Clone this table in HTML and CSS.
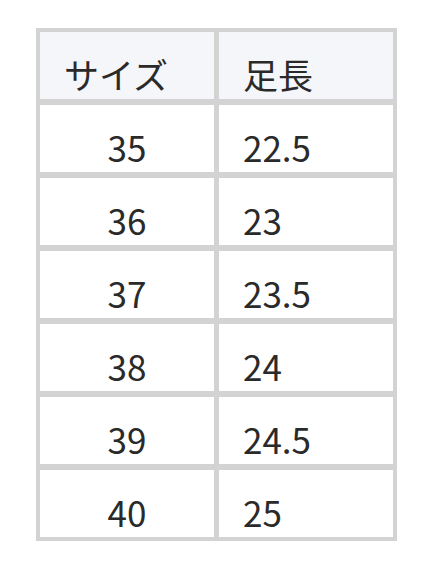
FILE: index.html
```html
<!DOCTYPE html>
<html lang="ja">
<head>
<meta charset="utf-8">
<link rel="stylesheet" href="styles.css">
</head>
<body>
<div class="size-table" role="table">
  <div class="cell head" role="columnheader">サイズ</div>
  <div class="cell head" role="columnheader">足長</div>
  <div class="cell num" role="cell">35</div>
  <div class="cell" role="cell">22.5</div>
  <div class="cell num" role="cell">36</div>
  <div class="cell" role="cell">23</div>
  <div class="cell num" role="cell">37</div>
  <div class="cell" role="cell">23.5</div>
  <div class="cell num" role="cell">38</div>
  <div class="cell" role="cell">24</div>
  <div class="cell num" role="cell">39</div>
  <div class="cell" role="cell">24.5</div>
  <div class="cell num" role="cell">40</div>
  <div class="cell" role="cell">25</div>
</div>
</body>
</html>
```
FILE: styles.css
```css
html, body {
  margin: 0;
  padding: 0;
  background: #ffffff;
}
body {
  padding: 28px 0 0 36px;
  font-family: "Noto Sans CJK JP", "Noto Sans", sans-serif;
  color: #2a2a2a;
}
.size-table {
  display: grid;
  grid-template-columns: 174px 174px;
  grid-auto-rows: 67px;
  column-gap: 5px;
  row-gap: 6px;
  padding: 4px;
  background: #d3d3d3;
  width: max-content;
}
.cell {
  background: #ffffff;
  font-size: 35px;
  line-height: 40px;
  padding: 22px 24px 5px;
  text-align: left;
  box-sizing: border-box;
}
.head {
  background: #f5f6fa;
  font-weight: 400;
}
.num {
  text-align: center;
}
```
